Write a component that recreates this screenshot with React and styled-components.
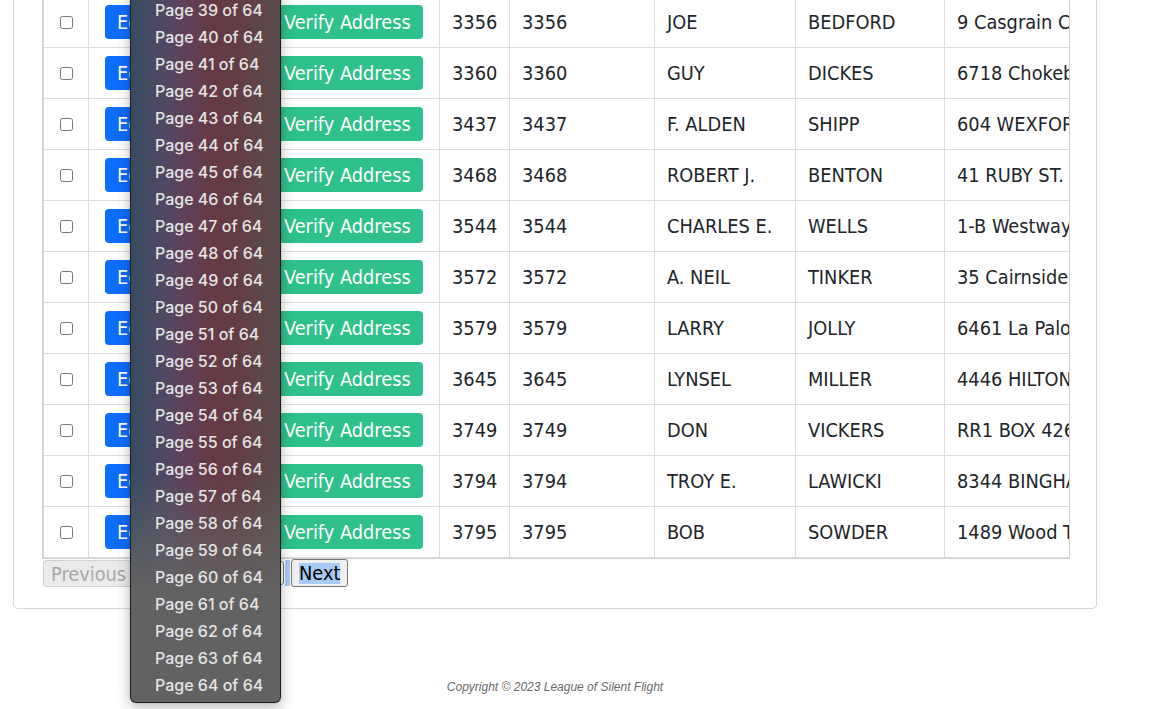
import React from 'react';
import styled, { createGlobalStyle } from 'styled-components';

const GlobalStyle = createGlobalStyle`
  html, body { margin: 0; padding: 0; background: #fff; }
  body {
    font-family: "DejaVu Sans Condensed", "DejaVu Sans", Verdana, sans-serif;
    font-stretch: semi-condensed;
    color: #212529;
  }
`;

const Screen = styled.div`
  position: relative;
  height: 709px;
  overflow: hidden;
  padding-left: 13px;
`;

const Card = styled.section`
  box-sizing: border-box;
  width: 1084px;
  margin-top: -3px;
  padding: 0 26px 21px 28px;
  border: 1px solid #d6d6d6;
  border-top: none;
  border-radius: 0 0 5px 5px;
`;

const TableWrap = styled.div`
  overflow: hidden;
  border-left: 2px solid #d4d4d4;
  border-right: 1px solid #cfcfcf;
  border-bottom: 1px solid #cdcdcd;
`;

const Table = styled.table`
  table-layout: fixed;
  border-collapse: separate;
  border-spacing: 0;
  width: 1161px;
`;

const Col = styled.col`
  width: ${(p) => p.$w}px;
`;

const Td = styled.td`
  box-sizing: border-box;
  padding: ${(p) => (p.$pad === 'button' ? '8px 16px' : p.$pad === 'none' ? '0' : '2px 12px 0')};
  border-right: 1px solid #dcdcdc;
  border-bottom: 1px solid #dcdcdc;
  white-space: nowrap;
  overflow: hidden;
  vertical-align: middle;
  font-size: 19.8px;
  line-height: 22px;
  text-align: ${(p) => (p.$center ? 'center' : 'left')};
`;

const CheckBox = styled.input`
  display: block;
  margin: 0 auto;
  width: 13px;
  height: 13px;
`;

const ActionButton = styled.button`
  display: block;
  box-sizing: border-box;
  height: 34px;
  padding: 2px 12px 0;
  border: none;
  border-radius: 4px;
  font-family: inherit;
  font-stretch: inherit;
  font-size: 19.8px;
  line-height: 32px;
  color: #fff;
  white-space: nowrap;
  background: ${(p) => (p.$variant === 'verify' ? '#2fc18c' : '#0d6efd')};
`;

const Pager = styled.div`
  display: flex;
  align-items: center;
  height: 28px;
  padding-left: 1px;
`;

const PrevButton = styled.button`
  box-sizing: border-box;
  width: 100px;
  height: 27px;
  padding: 2px 0 0 7px;
  text-align: left;
  font-family: inherit;
  font-stretch: inherit;
  font-size: 19.8px;
  line-height: 23px;
  color: #a9a9a9;
  background: #ebebeb;
  border: 1px solid #d2d2d2;
  border-radius: 3px;
`;

const PageSelect = styled.div`
  box-sizing: border-box;
  width: 137px;
  height: 24px;
  margin-left: 4px;
  border: 1px solid #767676;
  border-radius: 3px;
  background: #fff;
`;

const SelectedGap = styled.span`
  width: 5px;
  height: 26px;
  margin-left: 1px;
  background: #a7cbf5;
`;

const NextButton = styled.button`
  box-sizing: border-box;
  height: 28px;
  margin-left: 1px;
  padding: 1px 7px 0;
  font-family: inherit;
  font-stretch: inherit;
  font-size: 19.8px;
  color: #000;
  background: #efefef;
  border: 1px solid #767676;
  border-radius: 3px;
`;

const Selected = styled.span`
  display: inline-block;
  line-height: 21px;
  background: #a7cbf5;
`;

const Footer = styled.footer`
  width: 1084px;
  padding-top: 71px;
  text-align: center;
  font-family: "Liberation Sans", Arial, sans-serif;
  font-stretch: normal;
  font-style: italic;
  font-size: 12px;
  line-height: 14px;
  color: #6a6a6a;
`;

const Popup = styled.ul`
  position: absolute;
  left: 130px;
  bottom: 6px;
  width: 151px;
  box-sizing: border-box;
  margin: 0;
  padding: 0 0 3px;
  list-style: none;
  border: 1px solid rgba(25, 25, 25, 0.9);
  border-radius: 6px;
  background:
    linear-gradient(to bottom, rgba(98, 98, 98, 0) 0, rgba(98, 98, 98, 0) calc(100% - 225px), #626262 calc(100% - 112px), #626262 100%),
    linear-gradient(to right, #394a5f 0%, #3f4b62 7%, #534862 24%, #603f55 40%, #653a45 55%, #623c43 70%, #5d4849 88%, #5b4c4d 100%);
  box-shadow: 0 4px 14px rgba(0, 0, 0, 0.28), 0 0 2px rgba(0, 0, 0, 0.2);
`;

const PopupItem = styled.li`
  height: 27px;
  line-height: 27px;
  padding-left: 24px;
  font-family: Inter, "Noto Sans", sans-serif;
  font-stretch: normal;
  font-weight: 500;
  font-size: 16px;
  color: #e4e4e4;
  white-space: nowrap;
`;

const rows = [
  ['3356', 'JOE', 'BEDFORD', '9 Casgrain Court'],
  ['3360', 'GUY', 'DICKES', '6718 Chokeberry Rd'],
  ['3437', 'F. ALDEN', 'SHIPP', '604 WEXFORD DR'],
  ['3468', 'ROBERT J.', 'BENTON', '41 RUBY ST.'],
  ['3544', 'CHARLES E.', 'WELLS', '1-B Westway Dr'],
  ['3572', 'A. NEIL', 'TINKER', '35 Cairnside Cres'],
  ['3579', 'LARRY', 'JOLLY', '6461 La Paloma Dr'],
  ['3645', 'LYNSEL', 'MILLER', '4446 HILTON AVE'],
  ['3749', 'DON', 'VICKERS', 'RR1 BOX 426'],
  ['3794', 'TROY E.', 'LAWICKI', '8344 BINGHAM RD'],
  ['3795', 'BOB', 'SOWDER', '1489 Wood Trail'],
];

const colWidths = [45, 167, 184, 70, 145, 141, 149, 260];

const pages = [];
for (let i = 38; i <= 64; i += 1) pages.push(i);

export default function App() {
  return (
    <>
      <GlobalStyle />
      <Screen>
        <Card>
          <TableWrap>
            <Table>
              <colgroup>
                {colWidths.map((w, i) => (
                  <Col key={i} $w={w} />
                ))}
              </colgroup>
              <tbody>
                {rows.map(([id, first, last, addr]) => (
                  <tr key={id}>
                    <Td $pad="none" $center>
                      <CheckBox type="checkbox" />
                    </Td>
                    <Td $pad="button">
                      <ActionButton>Edit</ActionButton>
                    </Td>
                    <Td $pad="button">
                      <ActionButton $variant="verify">Verify Address</ActionButton>
                    </Td>
                    <Td>{id}</Td>
                    <Td>{id}</Td>
                    <Td>{first}</Td>
                    <Td>{last}</Td>
                    <Td>{addr}</Td>
                  </tr>
                ))}
              </tbody>
            </Table>
          </TableWrap>
          <Pager>
            <PrevButton disabled>Previous</PrevButton>
            <PageSelect />
            <SelectedGap />
            <NextButton>
              <Selected>Next</Selected>
            </NextButton>
          </Pager>
        </Card>
        <Footer>Copyright © 2023 League of Silent Flight</Footer>
        <Popup>
          {pages.map((p) => (
            <PopupItem key={p}>Page {p} of 64</PopupItem>
          ))}
        </Popup>
      </Screen>
    </>
  );
}
